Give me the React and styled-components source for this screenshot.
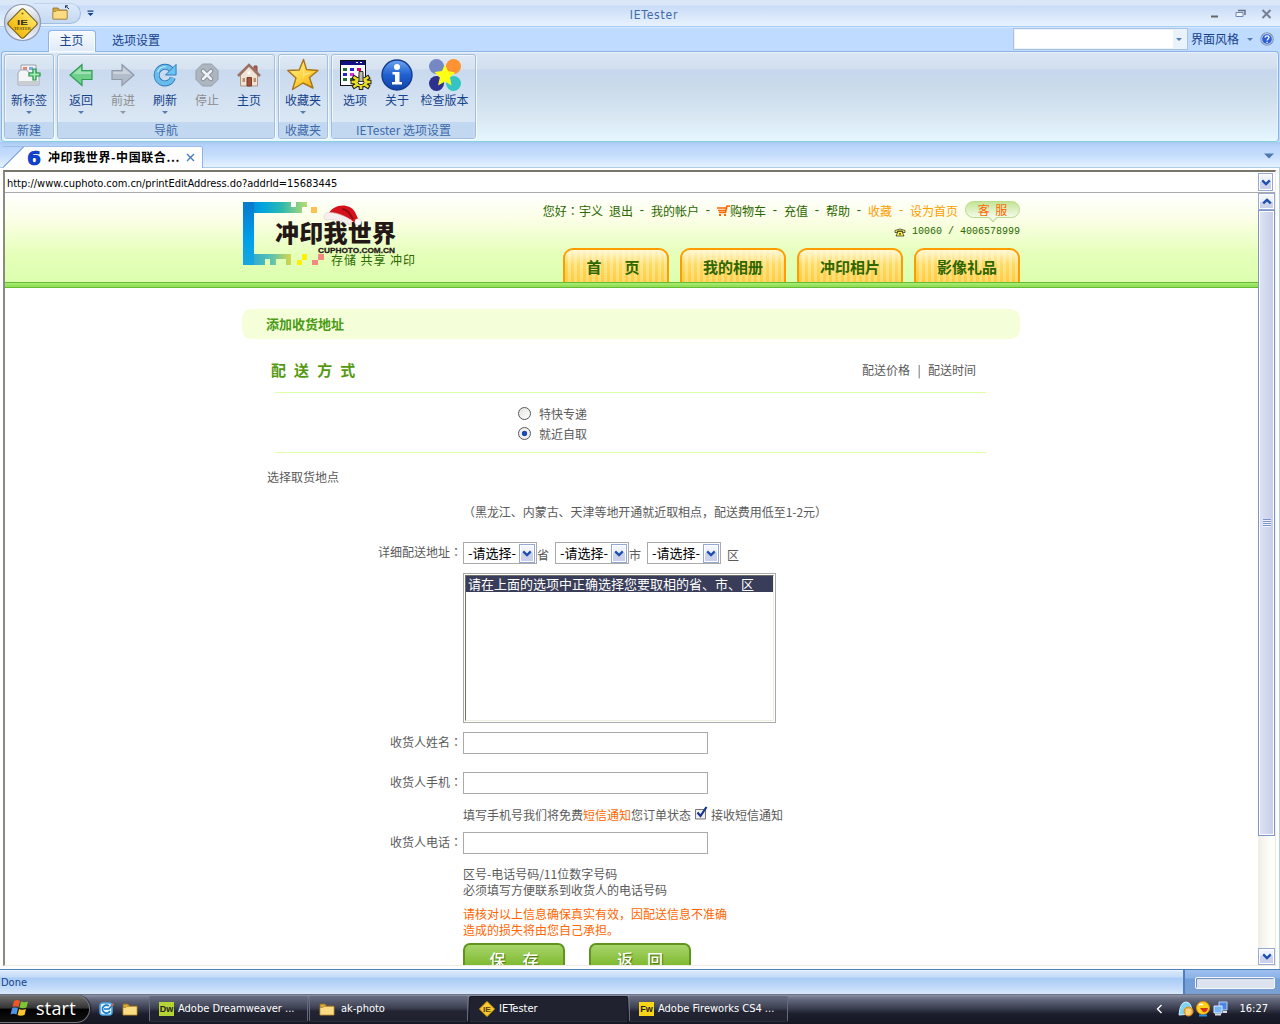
import React from "react";
import styled, { createGlobalStyle } from "styled-components";

const cjk = '"Noto Sans CJK SC", sans-serif';
const ui = '"DejaVu Sans Condensed", "Noto Sans", "Noto Sans CJK SC", sans-serif';

const Global = createGlobalStyle`
  *, *::before, *::after { box-sizing: border-box; }
  body { margin: 0; background: #fff; }
  svg { display: block; flex: none; }
`;

/* ---------- window shell ---------- */
const Desktop = styled.div`
  width: 1280px; height: 1024px; overflow: hidden; position: relative;
  display: flex; flex-direction: column;
  font: 12px/16px ${cjk}; color: #15428b; white-space: pre;
`;
const TitleBar = styled.header`
  height: 27px; flex: none; display: flex; align-items: flex-start; justify-content: space-between;
  border-bottom: 1px solid #a6cff5;
  background: linear-gradient(#dbe8f8 0, #d8e6f8 5px, #c9dcf6 6px, #d6e5f9 14px, #e8f2fe 26px);
`;
const QuickBar = styled.div`
  display: flex; align-items: center; width: 200px; height: 26px; padding-left: 34px;
`;
const QuickPill = styled.div`
  width: 47px; height: 21px; padding: 0 0 0 18px; display: flex; align-items: center;
  border: 1px solid #a3bde0; border-left: 0; border-top-color: #c0d3ee; border-radius: 0 11px 11px 0;
  background: linear-gradient(#dce9fa, #c5d9f3);
`;
const QuickMore = styled.div`margin-left: 6px;`;
const AppTitle = styled.div`
  font: 12px/30px ${ui}; letter-spacing: .8px; color: #3e6aaa; width: 200px; text-align: center; padding-left: 28px;
`;
const WindowButtons = styled.div`
  width: 200px; display: flex; justify-content: flex-end; gap: 14px; padding: 8px 7px 0 0;
`;
const Orb = styled.div`position: absolute; left: 3px; top: 3px; z-index: 2;`;
const TabRow = styled.nav`
  height: 24px; flex: none; display: flex; align-items: flex-end; background: #bfdbff;
  border-top: 1px solid #d5e7fe; padding-left: 48px;
`;
const RibbonTab = styled.div`
  width: ${p => p.$w}px; height: 22px; line-height: 20px; text-align: center; margin-bottom: -1px; z-index: 1;
  ${p => p.$active && `border: 1px solid #8db2e3; border-bottom: 0; border-radius: 4px 4px 0 0; line-height: 18px;
  padding-right: 1px;
  background: linear-gradient(#f6faff, #dfeaf7); box-shadow: inset 0 0 0 1px #f8fcff;`}
`;
const Fill = styled.div`flex: 1;`;
const SearchBox = styled.div`
  width: 175px; height: 22px; border: 1px solid #abc1de; background: #eaf2fb; padding: 1px;
  display: flex; align-items: center; margin-bottom: 1px;
`;
const SearchField = styled.div`flex: 1; height: 18px; background: #fff;`;
const SearchDrop = styled.div`width: 13px; display: flex; justify-content: center;`;
const StyleMenu = styled.div`
  display: flex; align-items: center; height: 24px; gap: 7.5px; padding: 0 6px 0 3px; line-height: 22px;
`;

/* ---------- ribbon ---------- */
const RibbonWrap = styled.div`height: 91px; flex: none; background: #bfdbff;`;
const Ribbon = styled.section`
  height: 91px; margin: 0 1px 0 1px; display: flex; gap: 3px; padding: 2px 2px 3px;
  border: 1px solid #8db2e3; border-bottom-color: #86cfe0; border-radius: 4px;
  background: linear-gradient(#dbe6f3 0, #d1deee 17px, #c6d7ee 18px, #ccdcea 40px, #dbe9f5 68px, #e4f6ff 88px);
  box-shadow: inset 0 0 0 1px rgba(235,248,255,.65);
`;
const Group = styled.div`
  width: ${p => p.$w}px; height: 85px; display: flex; flex-direction: column;
  border: 1px solid #a3bfdc; border-radius: 3px; overflow: hidden;
  box-shadow: inset 1px 1px 0 rgba(255,255,255,.6), 1px 1px 0 rgba(255,255,255,.7);
  background: linear-gradient(#dfe9f5 0, #d6e2f0 14px, #c9d9ee 15px, #dbe8f4 68px);
`;
const GroupItems = styled.div`flex: 1; display: flex; padding: 0 2px;`;
const GroupName = styled.div`
  height: 16px; line-height: 15px; text-align: center; background: #c1d8f0; color: #3e6aaa;
`;
const Tool = styled.div`
  width: ${p => p.$w || 42}px; display: flex; flex-direction: column; align-items: center;
  color: ${p => (p.$off ? "#8d8d8d" : "#15428b")};
`;
const ToolIcon = styled.div`height: 37px; padding-top: 3px; display: flex; align-items: center; justify-content: center;`;
const ToolText = styled.div`height: 19px; line-height: 16px; flex: none;`;
const Arrow = styled.i`
  width: 0; height: 0; border: 3px solid transparent; border-bottom: 0;
  border-top-color: ${p => p.$c || "#567db1"};
`;

/* ---------- document tabs ---------- */
const DocStrip = styled.div`
  height: 26px; flex: none; display: flex; align-items: flex-end; justify-content: space-between;
  background: linear-gradient(#a9c9ef 0, #b8d4fb 4px, #c7defd 14px, #e6f1ff 25px);
  border-bottom: 1px solid #a9cdec; padding: 0 6px 0 3px;
`;
const DocTab = styled.div`
  width: 200px; height: 22px; margin-bottom: -1px; padding-left: 22px;
  display: flex; align-items: center;
  background: linear-gradient(135deg, transparent 14px, #8db2e3 14px, #8db2e3 15px, #fff 15px);
  border-top: 1px solid #9dbde6; border-right: 1px solid #8db2e3; border-radius: 0 2px 0 0;
`;
const DocTitle = styled.div`font-weight: 700; color: #000; width: 138px; margin: -2px 0 0 5px; letter-spacing: .6px;`;
const StripMenu = styled.div`height: 14px;`;

/* ---------- browser frame ---------- */
const Frame = styled.main`
  height: 801px; flex: none; padding: 2px 3px 3px; border-right: 1px solid #b3cdea; background: #fff;
`;
const Browser = styled.div`
  height: 796px; border: 1px solid #f0ede0; border-top: 2px solid #77756a; border-left: 2px solid #8d8a80;
  display: flex; flex-direction: column;
`;
const AddressBar = styled.div`
  height: 21px; flex: none; border-bottom: 1px solid #aaa; display: flex; align-items: center;
  justify-content: space-between; padding: 0 2px 0 2px; font: 11px/16px ${ui}; color: #000;
`;
const Url = styled.div`letter-spacing: -0.035px; padding-top: 3px;`;
const LunaButton = styled.div`
  width: ${p => p.$w}px; height: ${p => p.$h}px; flex: none; display: flex; align-items: center; justify-content: center;
  border: 1px solid #95a9d6; box-shadow: inset 0 0 0 1px #fff;
  background: linear-gradient(#f6f8fd 0, #e8edf8 50%, #ccd4ec 50%, #c9cfe8 100%);
`;
const Viewport = styled.div`flex: 1; min-height: 0; display: flex;`;
const Page = styled.div`flex: 1; overflow: hidden; background: #fff; color: #5a5a5a;`;
const ScrollTrack = styled.div`
  width: 17px; display: flex; flex-direction: column; justify-content: space-between;
  background: linear-gradient(90deg, #f0eee5, #fdfdfa 70%);
`;
const ScrollThumb = styled.div`
  height: 626px; border: 1px solid #7d95c8; box-shadow: inset 0 0 0 1px #fff;
  background: linear-gradient(90deg, #dfe4f4, #c9d1ea 80%); display: flex; align-items: center; justify-content: center;
`;
const Grip = styled.div`
  width: 8px; height: 8px; background: repeating-linear-gradient(#7d95c8 0 1px, #eef1fa 1px 2px);
`;

/* ---------- site header ---------- */
const SiteHeader = styled.header`
  background: linear-gradient(#fff 0, #fbffe6 26px, #e5ffb9 62px, #dbffae 89px);
`;
const GreenBar = styled.div`
  height: 6px; background: linear-gradient(#66bd33 0 1px, #a8ec72 1px, #8bdc52 5px, #66bd33 5px);
`;
const Wrap = styled.div`width: 778px; margin-left: 237px;`;
const HeaderInner = styled(Wrap)`height: 89px; display: flex; justify-content: space-between; padding: 9px 0 0 1px;`;
const HeaderRight = styled.div`display: flex; flex-direction: column; align-items: flex-end; color: #2b6600;`;
const TopLinks = styled.div`display: flex; align-items: center; height: 18px;`;
const Dash = styled.span`width: 18px; text-align: center; font-family: "Liberation Mono", monospace; color: ${p => p.$c || "inherit"};`;
const Link = styled.span`color: ${p => p.$c || "inherit"}; margin-right: ${p => p.$r || 0}px;`;
const Bubble = styled.div`
  width: 55px; height: 17px; border: 1px solid #b9dc86; border-radius: 9px; color: #ff6600;
  background: linear-gradient(#c3e594, #f3faea); text-align: center; line-height: 15px; word-spacing: 3px;
  position: relative; margin-top: -3px;
  &::after { content: ""; position: absolute; left: 24px; bottom: -4px; width: 6px; height: 6px;
    background: #f3faea; border: solid #b9dc86; border-width: 0 1px 1px 0; transform: rotate(45deg); }
`;
const Hotline = styled.div`
  display: flex; align-items: center; gap: 6px; height: 16px; margin-top: 4px;
  font: 10px/16px "Liberation Mono", monospace;
`;
const SiteNav = styled.nav`display: flex; gap: 11px; margin-top: 8px;`;
const NavTab = styled.div`
  width: 106px; height: 34px; border: 2px solid #ff9c00; border-bottom: 0; border-radius: 10px 10px 0 0;
  background: linear-gradient(rgba(255,250,220,.95) 0, rgba(255,232,140,.35) 45%, rgba(255,190,40,.3) 100%),
    repeating-linear-gradient(90deg, #ffd34d 0 3px, #ffe68d 3px 6px);
  font: bold 15px/33px ${cjk}; color: #2f6600; display: flex; justify-content: center; gap: 23px;
  padding-right: ${p => p.$shift || 0}px;
`;

/* ---------- form ---------- */
const Banner = styled.h1`
  margin: 21px 0 0; height: 30px; border-radius: 9px; background: #f4ffda; padding-left: 24px;
  font: bold 13px/29px ${cjk}; color: #4a9a14;
`;
const SectionHead = styled.div`
  height: 53px; padding: 8px 44px 0 29px; display: flex; align-items: center; justify-content: space-between;
`;
const SectionTitle = styled.h2`margin: 0; font: bold 15px/20px ${cjk}; letter-spacing: 8.1px; color: #559911;`;
const SectionLinks = styled.div`display: flex; width: 114px; justify-content: space-between;`;
const Rule = styled.div`height: 1px; margin: 0 34px 0 33px; background: #ddffa8;`;
const Radios = styled.div`padding: 11px 0 8px 276px;`;
const RadioRow = styled.label`height: 20px; display: flex; align-items: center; gap: 8px;`;
const RadioDot = styled.i`
  width: 13px; height: 13px; border: 1.5px solid #55585c; border-radius: 50%; margin-top: -1px;
  background: ${p => (p.$on ? "radial-gradient(circle, #1f4bb0 0 2.4px, #f0f0ee 3.1px)" : "linear-gradient(135deg, #e3e3dd, #fff)")};
`;
const Pickup = styled.div`height: 48px; line-height: 47px; padding-left: 25px;`;
const Note = styled.div`height: 22px; line-height: 21px; padding-left: 221px; letter-spacing: -.05px;`;
const Row = styled.div`display: flex; align-items: flex-start; padding-top: ${p => p.$top || 0}px;`;
const Label = styled.div`width: 221px; padding-right: 1px; line-height: 19px; text-align: right;`;
const Colon = styled.span`font-family: "Noto Sans CJK TC", sans-serif;`;
const Select = styled.div`
  width: 74px; height: 22px; border: 1px solid #aaa; background: #fff; color: #000; padding: 0 1px 0 4px;
  display: flex; align-items: center; justify-content: space-between; font-size: 13px;
`;
const Unit = styled.span`width: 18px; height: 22px; padding-left: ${p => p.$l || 0}px; line-height: 26px;`;
const ListBox = styled.div`
  width: 313px; height: 150px; margin: 9px 0 0 221px; border: 1px solid #aaa; padding: 1px;
`;
const ListInner = styled.div`
  height: 146px; border: 1px solid #efede0; border-top-color: #6f6d64; border-left-color: #6f6d64;
`;
const Option = styled.div`
  height: 16px; background: #393d59; color: #fff; font-size: 13px; line-height: 16px; padding-left: 2px;
`;
const Input = styled.div`width: 245px; height: 22px; border: 1px solid #aaa; background: #fff;`;
const Sms = styled.div`height: 38px; padding: 3px 0 0 221px; display: flex; align-items: center;`;
const Orange = styled.span`color: #ff6600;`;
const Check = styled.div`margin: -3px 3px 0 4px;`;
const Hint = styled.div`margin: ${p => p.$top}px 0 0 221px; color: ${p => p.$c || "inherit"};`;
const Buttons = styled.div`margin: 5px 0 0 221px; display: flex; gap: 24px;`;
const Button = styled.div`
  width: 102px; height: 33px; border: 2px solid #5f951d; border-radius: 7px;
  background: linear-gradient(#a7d56b, #7cb82c 22px); color: #fff; text-shadow: 1px 1px 1px #47720f;
  font: 500 16px/28px ${cjk}; display: flex; justify-content: center; gap: ${p => p.$gap}px;
`;

/* ---------- status and task bars ---------- */
const StatusBar = styled.footer`
  height: 25px; flex: none; border-top: 1px solid #4f7fbe; display: flex;
  background: linear-gradient(#fff 0, #d8e7fb 1px, #c6dbf8 7px, #a9cbf4 8px, #b7d4f8 14px, #d8e7fb 24px);
  font: 11px/25px ${ui};
`;
const StatusText = styled.div`flex: 1; padding-left: 1px;`;
const ProgressPane = styled.div`
  width: 97px; border-left: 2px solid #4f7fbe; padding: 7px 5px 0 10px;
  background: linear-gradient(#9ebfee 0, #8bb2e9 8px, #719fdc 9px, #7c9fd0 24px);
`;
const Progress = styled.div`height: 12px; border: 1px solid #f4f8fe; border-radius: 2px; background: #dce2ee; box-shadow: inset 1px 1px 0 #7290bc;`;
const TaskBar = styled.footer`
  height: 30px; flex: none; display: flex; align-items: center; color: #fff;
  background: linear-gradient(#555b6e 0, #8b91a5 1px, #666b80 5px, #3b3f50 14px, #1c1e2c 20px, #151722 30px);
  font: 11px/20px ${ui};
`;
const Start = styled.div`
  width: 90px; height: 28px; display: flex; align-items: center; gap: 7px; padding: 0 0 3px 10px;
  border-radius: 0 14px 14px 0; border: 1px solid #777; border-left: 0;
  background: linear-gradient(#6c6c6c, #363636 45%, #000 52%, #111); font: 18px/24px "Open Sans", sans-serif;
  letter-spacing: .2px; box-shadow: 1px 0 1px #1b1d28;
`;
const QuickLaunch = styled.div`display: flex; gap: 7px; width: 59px; padding-left: 9px;`;
const Task = styled.div`
  width: 159px; height: 26px; margin-right: 1px; display: flex; align-items: center; gap: 4px; padding-left: 9px;
  border: 1px solid ${p => (p.$on ? "#171923" : "#656a7e")}; border-radius: 2px; border-bottom-color: #2c2e3c;
  background: ${p => (p.$on ? "#20232f" : "linear-gradient(#666b80, #3d4152 45%, #222432 60%, #1f212d)")};
`;
const Badge = styled.div`
  width: 15px; height: 14px; background: ${p => p.$c}; color: #222; font: bold 9px/14px "Liberation Sans", sans-serif; text-align: center;
`;
const Tray = styled.div`display: flex; align-items: center; gap: 2px; padding-right: 12px;`;
const Clock = styled.div`margin-left: 8px; font-size: 11px;`;
const TrayToggle = styled.div`margin-right: 13px;`;

/* ---------- drawings ---------- */
const Chevron = ({ up }) => (
  <svg width="10" height="7" viewBox="0 0 10 7">
    <path d={up ? "M1.2 5.4 5 1.8 8.8 5.4" : "M1.2 1.4 5 5 8.8 1.4"} fill="none" stroke="#1f4fae" strokeWidth="2.4" />
  </svg>
);
const OrbIcon = () => (
  <svg width="40" height="40" viewBox="0 0 40 40">
    <defs><linearGradient id="orb" x1="0" y1="0" x2="0" y2="1"><stop stopColor="#fff" /><stop offset=".5" stopColor="#c5ccd8" /><stop offset="1" stopColor="#f5f8fc" /></linearGradient>
      <linearGradient id="yel" x1="0" y1="0" x2="0" y2="1"><stop stopColor="#ffe25e" /><stop offset="1" stopColor="#f0b90f" /></linearGradient></defs>
    <circle cx="19.5" cy="19.5" r="18" fill="url(#orb)" stroke="#8d9ab3" strokeWidth="1.2" />
    <rect x="8.5" y="9.5" width="22" height="22" rx="2.500" transform="rotate(45 19.5 20.5)" fill="url(#yel)" stroke="#66551a" strokeWidth="1" />
    <circle cx="19.5" cy="10.5" r="1" fill="#80600c" />
    <text x="14" y="22" fontFamily="Liberation Sans" fontWeight="bold" fontSize="8" textLength="11" lengthAdjust="spacingAndGlyphs" fill="#33301c">IE</text>
    <text x="11" y="27" fontFamily="Liberation Serif" fontWeight="bold" fontSize="4.4" textLength="17" fill="#6e5510">TESTER</text>
  </svg>
);
const Folder = ({ out }) => (
  <svg width="18" height="16" viewBox="0 0 18 16">
    <path d="M1 3h5l1.500 2H15v9H1z" fill="#d9a83c" stroke="#8b6a20" strokeWidth=".8" />
    <path d="M1 14V6.500h3L5 5.500h10V14z" fill="#fbdc83" stroke="#a47b25" strokeWidth=".6" />
    {out && <path d="M17 4 13.500.8M13.500 3V.8H16" stroke="#233a5e" fill="none" />}
  </svg>
);
const NewTab = () => (
  <svg width="24" height="24" viewBox="0 0 24 24">
    <path d="M4 9V2h15v7" fill="#eef1f5" stroke="#9aa2ac" />
    <path d="M6 4h4v3H6z" fill="#e78474" /><path d="M12 4h4v3h-4z" fill="#79aede" />
    <path d="M1 10 3 7h7l2 3h10v12H1z" fill="#f3f5f7" stroke="#a3aab4" />
    <path d="M2 18h19v3H2z" fill="#c9cdd2" />
    <path d="M16 6h3v4h4v3h-4v4h-3v-4h-4v-3h4z" fill="#a5eeb2" stroke="#219048" strokeWidth="1.200" />
  </svg>
);
const BackArrow = ({ off }) => (
  <svg width="24" height="24" viewBox="0 0 24 24">
    <path d={off ? "M1 7.500h10V1.500L23 12 11 22.500v-6H1z" : "M23 7.500H13V1.500L1 12l12 10.500v-6h10z"}
      fill={off ? "#b3bccb" : "#6ed08a"} stroke={off ? "#8f9aab" : "#2f9b55"} strokeWidth="1.200" />
    <path d={off ? "M2 9h10V4.500L20 11H2z" : "M22 9H12V4.500L4 11h18z"} fill="#fff" opacity=".35" />
  </svg>
);
const Refresh = () => (
  <svg width="24" height="24" viewBox="0 0 26 26">
    <path d="M20 7.500A9 9 0 1 0 21.500 16" fill="none" stroke="#2f78b8" strokeWidth="6.400" />
    <path d="M20 7.500A9 9 0 1 0 21.500 16" fill="none" stroke="#68bcec" strokeWidth="4.600" />
    <path d="M25 1.500V13H13.500l4-4z" fill="#6cc2f0" stroke="#2f78b8" />
    <path d="M5 10a9 9 0 0 1 9-6" fill="none" stroke="#b8e6fc" strokeWidth="1.500" />
  </svg>
);
const Stop = () => (
  <svg width="24" height="24" viewBox="0 0 24 24">
    <path d="M7.500 1h9L23 7.500v9L16.500 23h-9L1 16.500v-9z" fill="#adb5bf" stroke="#959eaa" />
    <path d="M8 8l8 8m0-8-8 8" stroke="#7d8793" strokeWidth="4.500" strokeLinecap="round" />
    <path d="M8 8l8 8m0-8-8 8" stroke="#eef1f4" strokeWidth="2.600" strokeLinecap="round" />
  </svg>
);
const Home = () => (
  <svg width="24" height="25" viewBox="0 0 24 25">
    <path d="M17 3h3v7h-3z" fill="#b05d4d" stroke="#8c5047" />
    <path d="M3.500 12 12 3l8.500 9v11h-17z" fill="#efe3d3" stroke="#b09584" />
    <path d="M1 13 12 2 23 13" fill="none" stroke="#9a7166" strokeWidth="2.600" />
    <path d="M10 14.500h4.500V23H10z" fill="#a64d3c" stroke="#71402f" />
    <path d="M5.500 15H8v4H5.500zM16.500 15H19v4h-2.500z" fill="#b9906c" /><path d="M10.500 8.500h3v3h-3z" fill="#fff" />
  </svg>
);
const Star = () => (
  <svg width="34" height="34" viewBox="0 0 34 34">
    <defs><linearGradient id="star" x1="0" y1="0" x2="1" y2="1"><stop stopColor="#fff3a0" /><stop offset=".5" stopColor="#ffd640" /><stop offset="1" stopColor="#f0a50c" /></linearGradient></defs>
    <path d="M17.500 1.500 20.500 11.500 32 12.500 23.500 19.500 27 30 17 25 6.500 31.500 10 20 1.800 12.500 13.200 12z" fill="url(#star)" stroke="#a8751a" strokeWidth="1.400" strokeLinejoin="round" />
    <path d="M17 5 18.500 15 28 14 18 18 17 23" fill="#fff" opacity=".3" />
  </svg>
);
const Options = () => (
  <svg width="34" height="32" viewBox="0 0 34 32" shapeRendering="crispEdges">
    <path d="M2 1h25v25H2z" fill="#fff" stroke="#111" /><path d="M3 2h24v4H3z" fill="#101080" />
    <path d="M18 3h2v1h-2zM22 3h2v1h-2z" fill="#fff" />
    <g fill="#207030"><path d="M5 9h4v3H5zM5 19h4v3H5zM12 19h4v3h-4z" /></g>
    <g fill="#2222d0"><path d="M12 9h4v3h-4zM5 14h4v3H5z" /></g><path d="M19 9h4v3h-4z" fill="#e00060" /><path d="M12 14h4v3h-4z" fill="#dd28dd" />
    <g transform="translate(23 22)" shapeRendering="auto">
      <g stroke="#222" strokeWidth="4.500"><path d="M-10.500 1H10.500M-8.500-4.500 8.500 6.500M8.500-4.500-8.500 6.500M0-6v15" /></g>
      <ellipse cy="1" rx="8" ry="5.500" fill="#222" />
      <g stroke="#eadc22" strokeWidth="2.600"><path d="M-9.500 1H9.500M-7.500-4 7.500 6M7.500-4-7.500 6M0-5V8" /></g>
      <ellipse cy="1" rx="6.800" ry="4.400" fill="#eadc22" /><ellipse cy="1.500" rx="3" ry="2" fill="#fff" stroke="#222" />
      <path d="M-2-9.500h4V.5h-4z" fill="#bbb" stroke="#333" />
    </g>
  </svg>
);
const Info = () => (
  <svg width="32" height="32" viewBox="0 0 32 32">
    <defs><linearGradient id="inf" x1="0" y1="0" x2="0" y2="1"><stop stopColor="#6fa6f0" /><stop offset=".5" stopColor="#1f5fd0" /><stop offset="1" stopColor="#1344a6" /></linearGradient></defs>
    <circle cx="16" cy="16" r="15" fill="url(#inf)" stroke="#123a8c" strokeWidth="1.400" />
    <circle cx="16" cy="8" r="3" fill="#fff" /><path d="M11.500 13h7v10h2.500v2.500H11V23h3v-7.500h-2.500z" fill="#fff" />
  </svg>
);
const Versions = () => (
  <svg width="34" height="34" viewBox="0 0 34 34">
    <circle cx="8.500" cy="8.500" r="7.500" fill="#7688c4" /><circle cx="25.500" cy="8.500" r="7.500" fill="#ff9233" />
    <circle cx="8.500" cy="25.500" r="7.500" fill="#2e2f8e" /><circle cx="25.500" cy="25.500" r="7.500" fill="#35c4c4" />
    <path d="M17 6.500 20 13 27 14.500 22 19.500 23.500 27.500 17 23.500 10 27.500 11.800 19.500 6.500 14 14 13z" fill="#fcff16" />
  </svg>
);
const Six = () => (
  <svg width="18" height="20" viewBox="0 0 18 20" overflow="visible">
    <text x="2" y="17" fontFamily="DejaVu Sans" fontWeight="bold" fontSize="19" textLength="14" lengthAdjust="spacingAndGlyphs" fill="#0a45dc" stroke="#0a2aa0" strokeWidth=".7">6</text>
  </svg>
);
const Help = () => (
  <svg width="14" height="14" viewBox="0 0 14 14">
    <circle cx="7" cy="7" r="6.200" fill="#2b61cf" stroke="#8a9ab5" strokeWidth="1.200" />
    <circle cx="7" cy="7" r="5.300" fill="none" stroke="#dce9fc" strokeWidth=".8" />
    <path d="M5 5.600c.1-2.200 4-2.200 4 0C9 7 7.100 6.900 7.100 8.500M7.100 9.800v1.300" fill="none" stroke="#fff" strokeWidth="1.300" />
  </svg>
);
const Logo = () => (
  <svg width="174" height="68" viewBox="0 0 174 68">
    <defs>
      <linearGradient id="br" x1="0" y1="0" x2="1" y2="0"><stop stopColor="#0a7ed0" /><stop offset=".3" stopColor="#00a4e0" /><stop offset=".6" stopColor="#2bb8b0" /><stop offset="1" stopColor="#b8dc70" /></linearGradient>
      <linearGradient id="bl" x1="0" y1="0" x2="0" y2="1"><stop stopColor="#0a78cc" /><stop offset=".6" stopColor="#00a0ea" /><stop offset="1" stopColor="#1aa6dd" /></linearGradient>
      <linearGradient id="bb" x1="0" y1="0" x2="1" y2="0"><stop stopColor="#18a0dd" /><stop offset=".6" stopColor="#5dc2b0" /><stop offset="1" stopColor="#d6d84a" /></linearGradient>
    </defs>
    <g shapeRendering="crispEdges">
      <path d="M0 0h48v5h5V0h11v5h-5v6H0z" fill="url(#br)" />
      <path d="M0 52h48v11h-5v-6h-5v-0h-5v6h-6v-6h-5v6H0z" fill="url(#bb)" />
      <path d="M0 0h11v63H0z" fill="url(#bl)" />
      <path d="M68 5h6v6h-6z" fill="#ffc14d" />
      <path d="M59 52h5v6h-5zM54 58h5v5h-5z" fill="#ffef00" />
      <path d="M75 52h6v6h-6zM69 58h6v5h-6z" fill="#f28a80" />
    </g>
    <text x="32" y="40" fontFamily="Noto Sans CJK SC" fontWeight="900" fontSize="24" textLength="121" fill="#231815">冲印我世界</text>
    <g transform="translate(3 1)">
      <path d="M82 12C86 1 103-1 109 9l5 11-4 1-6-5-2 3z" fill="#d5111b" /><path d="M96 6c5 0 8 5 11 10" stroke="#870a12" strokeWidth="1.500" fill="none" />
      <path d="M80 10c6-2 19 2 26 8l-2 4c-8-5-17-6-25-5-2-2-1-5 1-7z" fill="#f7eeee" stroke="#e1caca" strokeWidth=".6" /><circle cx="112" cy="19" r="3.200" fill="#fff" stroke="#dcc8c8" strokeWidth=".6" />
    </g>
    <text x="75" y="51" fontFamily="Liberation Sans" fontWeight="bold" fontSize="8" textLength="77" lengthAdjust="spacingAndGlyphs" fill="#231815" stroke="#231815" strokeWidth=".3">CUPHOTO.COM.CN</text>
    <text x="88" y="63" fontFamily="Noto Sans CJK SC" fontSize="12" textLength="84" fill="#2b6600">存储 共享 冲印</text>
  </svg>
);
const Cart = () => (
  <svg width="13" height="12" viewBox="0 0 13 12"><path d="M13 1h-3L8.500 7.500H2M0 3h9M1 5.500h8" stroke="#ff6600" strokeWidth="1.600" fill="none" /><path d="M2 9h2v2H2zM7 9h2v2H7z" fill="#ff6600" /></svg>
);
const Phone = () => (
  <svg width="12" height="9" viewBox="0 0 12 9"><path d="M1 4.500V2.500Q6-.5 11 2.500v2H8.500V3h-5v1.500z" fill="#f4f04c" stroke="#222" strokeWidth=".7" /><path d="M4 3.500h4L10 8H2z" fill="#fff34c" stroke="#222" strokeWidth=".7" /><circle cx="6" cy="5.800" r=".9" fill="#222" /></svg>
);
const CheckIcon = () => (
  <svg width="13" height="14" viewBox="0 0 13 14"><path d="M.5 3.500h10v9.500H.5z" fill="#eee" stroke="#777" /><path d="M2.500 6.500 5.500 10 11.500 1" fill="none" stroke="#17338e" strokeWidth="2.200" /></svg>
);
const Flag = () => (
  <svg width="19" height="18" viewBox="0 0 19 18"><path d="M4 2q3-2 6 0L8.500 8q-3-1.500-6 0z" fill="#f0562a" /><path d="M11 2.500q3 1.500 7 0L16.500 8.500q-4 1.500-7 0z" fill="#7cc636" /><path d="M2 9.500q3-2 6 0L6.500 15.500q-3-1.500-6 0z" fill="#4c93ea" /><path d="M9 10q3 1.500 7 0l-1.500 6q-4 1.500-7 0z" fill="#fcc62b" /></svg>
);
const Desk = () => (
  <svg width="16" height="16" viewBox="0 0 16 16"><rect x="1" y="2" width="12" height="12" rx="3" fill="#e7f5ff" stroke="#4ba3e2" strokeWidth="1.600" /><path d="M10 5a4 4 0 1 0 1 5M5 8h5l4-5" fill="none" stroke="#1877c8" strokeWidth="1.600" /><path d="M11 6l3-4 1 2z" fill="#e06a3a" /></svg>
);
const Diamond = () => (
  <svg width="16" height="16" viewBox="0 0 16 16"><path d="M8 .5 15.500 8 8 15.500.5 8z" fill="#fbc92d" stroke="#dfa713" /><text x="4" y="10.800" fontFamily="Liberation Sans" fontWeight="bold" fontSize="7.500" textLength="8" lengthAdjust="spacingAndGlyphs" fill="#554411">IE</text></svg>
);
const Penguin = () => (
  <svg width="16" height="16" viewBox="0 0 16 16"><path d="M1 14Q2 1 8 1t6 12z" fill="#7fd3f3" stroke="#d5f3ff" /><circle cx="10.500" cy="10.500" r="4.500" fill="#f6b341" stroke="#d98818" /><path d="M8 9h5M8 11h5M8 13h4" stroke="#fff3c4" /></svg>
);
const Smile = () => (
  <svg width="15" height="16" viewBox="0 0 15 16"><circle cx="7" cy="7" r="6.500" fill="#fcd21b" stroke="#e28a12" /><path d="M4 7h8q-1 5-5 4z" fill="#d6351c" /><path d="M3 4q2-1.500 4 0" stroke="#fff" strokeWidth="1.500" fill="none" /><path d="M3 14.500h8" stroke="#218be0" strokeWidth="2" /></svg>
);
const Network = () => (
  <svg width="16" height="16" viewBox="0 0 16 16"><path d="M6 1h8v8H6z" fill="#4a86e6" stroke="#b8d0f6" /><path d="M1 5h8v7H1z" fill="#79b4fb" stroke="#dce9fb" /><path d="M2 13.500h6M10 11h4" stroke="#d8dce6" strokeWidth="2" /></svg>
);

const TextLabel = ({ children }) => <Label>{children}<Colon>：</Colon></Label>;
const Picker = () => (
  <Select>-请选择-<LunaButton $w={16} $h={19}><Chevron /></LunaButton></Select>
);
const navTools = [
  ["返回", <BackArrow />, true], ["前进", <BackArrow off />, true, true], ["刷新", <Refresh />, true],
  ["停止", <Stop />, false, true], ["主页", <Home />],
];
const ToolButton = ({ text, icon, drop, off, w }) => (
  <Tool $off={off} $w={w}>
    <ToolIcon>{icon}</ToolIcon><ToolText>{text}</ToolText>
    {drop && <Arrow $c={off ? "#999" : undefined} />}
  </Tool>
);

export default function App() {
  return (
    <Desktop>
      <Global />
      <Orb><OrbIcon /></Orb>
      <TitleBar>
        <QuickBar>
          <QuickPill><Folder out /></QuickPill>
          <QuickMore>
            <svg width="7" height="7" viewBox="0 0 7 7"><path d="M.5.500h6v1.200h-6zM.5 3h6l-3 3z" fill="#15428b" /></svg>
          </QuickMore>
        </QuickBar>
        <AppTitle>IETester</AppTitle>
        <WindowButtons>
          <svg width="12" height="12" viewBox="0 0 12 12"><path d="M2 8.500h7" stroke="#666" strokeWidth="2" /></svg>
          <svg width="12" height="12" viewBox="0 0 12 12"><path d="M3 2.500h7V7" fill="none" stroke="#666f80" strokeWidth="1.500" /><path d="M1 4.500h7v4H1z" fill="#eef5ff" stroke="#6d86ae" /></svg>
          <svg width="12" height="12" viewBox="0 0 12 12"><path d="M1.500 2l8 8m0-8-8 8" stroke="#747f92" strokeWidth="2" /></svg>
        </WindowButtons>
      </TitleBar>
      <TabRow>
        <RibbonTab $w={48} $active>主页</RibbonTab>
        <RibbonTab $w={80}>选项设置</RibbonTab>
        <Fill />
        <SearchBox><SearchField /><SearchDrop><Arrow /></SearchDrop></SearchBox>
        <StyleMenu>界面风格<Arrow /><Help /></StyleMenu>
      </TabRow>
      <RibbonWrap>
        <Ribbon>
          <Group $w={50}>
            <GroupItems><ToolButton w={44} text="新标签" icon={<NewTab />} drop /></GroupItems>
            <GroupName>新建</GroupName>
          </Group>
          <Group $w={218}>
            <GroupItems>{navTools.map(([text, icon, drop, off]) => <ToolButton key={text} {...{ text, icon, drop, off }} />)}</GroupItems>
            <GroupName>导航</GroupName>
          </Group>
          <Group $w={50}>
            <GroupItems><ToolButton w={44} text="收藏夹" icon={<Star />} drop /></GroupItems>
            <GroupName>收藏夹</GroupName>
          </Group>
          <Group $w={145}>
            <GroupItems>
              <ToolButton text="选项" icon={<Options />} />
              <ToolButton text="关于" icon={<Info />} />
              <ToolButton w={53} text="检查版本" icon={<Versions />} />
            </GroupItems>
            <GroupName>IETester 选项设置</GroupName>
          </Group>
        </Ribbon>
      </RibbonWrap>
      <DocStrip>
        <DocTab>
          <Six /><DocTitle>冲印我世界-中国联合...</DocTitle>
          <svg width="9" height="9" viewBox="0 0 9 9"><path d="M1 1l7 7M8 1 1 8" stroke="#4b7bbd" strokeWidth="1.400" /></svg>
        </DocTab>
        <StripMenu><svg width="10" height="6" viewBox="0 0 10 6"><path d="M0 .5h10L5 5.500z" fill="#4f77ad" /></svg></StripMenu>
      </DocStrip>
      <Frame>
        <Browser>
          <AddressBar>
            <Url>http://www.cuphoto.com.cn/printEditAddress.do?addrId=15683445</Url>
            <LunaButton $w={15} $h={18}><Chevron /></LunaButton>
          </AddressBar>
          <Viewport>
            <Page>
              <SiteHeader>
                <HeaderInner>
                  <Logo />
                  <HeaderRight>
                    <TopLinks>
                      <Link $r={6}>您好<Colon>：</Colon>宇义</Link><Link>退出</Link><Dash>-</Dash>
                      <Link>我的帐户</Link><Dash>-</Dash><Cart /><Link>购物车</Link><Dash>-</Dash>
                      <Link>充值</Link><Dash>-</Dash><Link>帮助</Link><Dash>-</Dash>
                      <Link $c="#ff9c00">收藏</Link><Dash $c="#ff9c00">-</Dash>
                      <Link $c="#ff9c00" $r={7}>设为首页</Link>
                      <Bubble>客 服</Bubble>
                    </TopLinks>
                    <Hotline><Phone />10060 / 4006578999</Hotline>
                    <SiteNav>
                      <NavTab $shift={6}><span>首</span><span>页</span></NavTab>
                      <NavTab>我的相册</NavTab><NavTab>冲印相片</NavTab><NavTab>影像礼品</NavTab>
                    </SiteNav>
                  </HeaderRight>
                </HeaderInner>
                <GreenBar />
              </SiteHeader>
              <Wrap>
                <Banner>添加收货地址</Banner>
                <SectionHead>
                  <SectionTitle>配送方式</SectionTitle>
                  <SectionLinks><span>配送价格</span><span>|</span><span>配送时间</span></SectionLinks>
                </SectionHead>
                <Rule />
                <Radios>
                  <RadioRow><RadioDot />特快专递</RadioRow>
                  <RadioRow><RadioDot $on />就近自取</RadioRow>
                </Radios>
                <Rule />
                <Pickup>选择取货地点</Pickup>
                <Note>（黑龙江、内蒙古、天津等地开通就近取相点，配送费用低至1-2元）</Note>
                <Row $top={19}>
                  <TextLabel>详细配送地址</TextLabel>
                  <Picker /><Unit>省</Unit><Picker /><Unit>市</Unit><Picker /><Unit $l={6}>区</Unit>
                </Row>
                <ListBox><ListInner><Option>请在上面的选项中正确选择您要取相的省、市、区</Option></ListInner></ListBox>
                <Row $top={9}><TextLabel>收货人姓名</TextLabel><Input /></Row>
                <Row $top={18}><TextLabel>收货人手机</TextLabel><Input /></Row>
                <Sms>填写手机号我们将免费<Orange>短信通知</Orange>您订单状态<Check><CheckIcon /></Check>接收短信通知</Sms>
                <Row><TextLabel>收货人电话</TextLabel><Input /></Row>
                <Hint $top={12}>区号-电话号码/11位数字号码<br />必须填写方便联系到收货人的电话号码</Hint>
                <Hint $top={8} $c="#ff6600">请核对以上信息确保真实有效，因配送信息不准确<br />造成的损失将由您自己承担。</Hint>
                <Buttons>
                  <Button $gap={17}><span>保</span><span>存</span></Button>
                  <Button $gap={14}><span>返</span><span>回</span></Button>
                </Buttons>
              </Wrap>
            </Page>
            <ScrollTrack>
              <div>
                <LunaButton $w={17} $h={17}><Chevron up /></LunaButton>
                <ScrollThumb><Grip /></ScrollThumb>
              </div>
              <LunaButton $w={17} $h={17}><Chevron /></LunaButton>
            </ScrollTrack>
          </Viewport>
        </Browser>
      </Frame>
      <StatusBar>
        <StatusText>Done</StatusText>
        <ProgressPane><Progress /></ProgressPane>
      </StatusBar>
      <TaskBar>
        <Start><Flag />start</Start>
        <QuickLaunch><Desk /><Folder /></QuickLaunch>
        <Task><Badge $c="#b5d334">Dw</Badge>Adobe Dreamweaver ...</Task>
        <Task><Folder />ak-photo</Task>
        <Task $on><Diamond />IETester</Task>
        <Task><Badge $c="#f7d619">Fw</Badge>Adobe Fireworks CS4 ...</Task>
        <Fill />
        <Tray>
          <TrayToggle><svg width="7" height="10" viewBox="0 0 7 10"><path d="M5.500 1 1.500 5l4 4" fill="none" stroke="#fff" strokeWidth="1.400" /></svg></TrayToggle>
          <Penguin /><Smile /><Network /><Clock>16:27</Clock>
        </Tray>
      </TaskBar>
    </Desktop>
  );
}
